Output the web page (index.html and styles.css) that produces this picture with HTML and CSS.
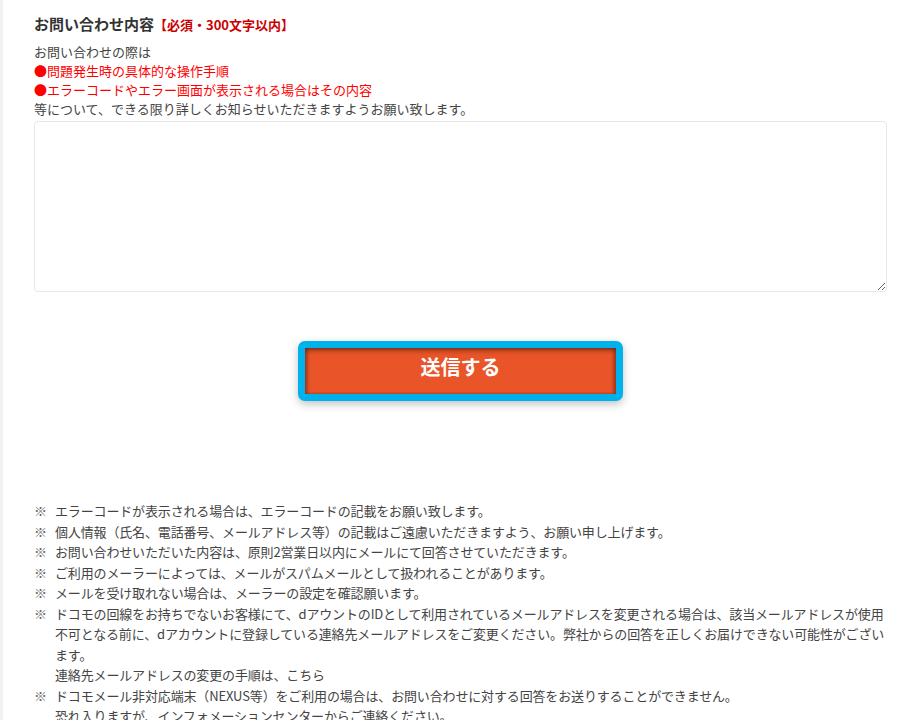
FILE: index.html
```html
<!DOCTYPE html>
<html lang="ja">
<head>
  <meta charset="UTF-8" />
  <meta name="viewport" content="width=device-width, initial-scale=1.0"/>
  <title>お問い合わせ</title>
  <link rel="stylesheet" href="styles.css">
</head>
<body>
  <div class="page">

    <form class="inquiry" onsubmit="return false;">
      <h2 class="field-title">お問い合わせ内容<span class="required">【必須・300文字以内】</span></h2>

      <div class="field-help">
        <p>お問い合わせの際は</p>
        <p class="point">●問題発生時の具体的な操作手順</p>
        <p class="point">●エラーコードやエラー画面が表示される場合はその内容</p>
        <p>等について、できる限り詳しくお知らせいただきますようお願い致します。</p>
      </div>

      <textarea class="message" name="message" maxlength="300"></textarea>

      <div class="submit-area">
        <button type="submit" class="submit-btn">送信する</button>
      </div>
    </form>

    <ul class="notes">
      <li>エラーコードが表示される場合は、エラーコードの記載をお願い致します。</li>
      <li>個人情報（氏名、電話番号、メールアドレス等）の記載はご遠慮いただきますよう、お願い申し上げます。</li>
      <li>お問い合わせいただいた内容は、原則2営業日以内にメールにて回答させていただきます。</li>
      <li>ご利用のメーラーによっては、メールがスパムメールとして扱われることがあります。</li>
      <li>メールを受け取れない場合は、メーラーの設定を確認願います。</li>
      <li>
        ドコモの回線をお持ちでないお客様にて、dアウントのIDとして利用されているメールアドレスを変更される場合は、該当メールアドレスが使用不可となる前に、dアカウントに登録している連絡先メールアドレスをご変更ください。弊社からの回答を正しくお届けできない可能性がございます。
        <span class="sub">連絡先メールアドレスの変更の手順は、<a href="#">こちら</a></span>
      </li>
      <li>
        ドコモメール非対応端末（NEXUS等）をご利用の場合は、お問い合わせに対する回答をお送りすることができません。
        <span class="sub">恐れ入りますが、インフォメーションセンターからご連絡ください。</span>
      </li>
    </ul>

  </div>
</body>
</html>
```

FILE: styles.css
```css
body {
  margin: 0;
  font-family: "Noto Sans CJK JP", sans-serif;
  color: #444;
  background: #fff;
}

.page {
  border-left: 3px solid #f1f1f1;
  padding: 14px 13px 0 31px;
  min-height: 720px;
}

.field-title {
  margin: 0 0 7px;
  font-size: 15px;
  line-height: 20px;
  font-weight: bold;
  color: #333;
}

.required {
  font-size: 13px;
  color: #cc0000;
}

.field-help p {
  margin: 0;
  font-size: 13px;
  line-height: 19px;
}

.field-help .point {
  color: #f00;
}

.message {
  display: block;
  box-sizing: border-box;
  width: 100%;
  height: 171px;
  margin-top: 3px;
  border: 1px solid #e8e8e8;
  border-radius: 4px;
  padding: 6px;
  font-family: inherit;
  font-size: 13px;
}

.submit-area {
  display: flex;
  justify-content: center;
  padding-top: 49px;
}

.submit-btn {
  width: 325px;
  height: 60px;
  padding: 0 0 10px;
  border: 7px solid #00b2ec;
  border-radius: 7px;
  background: #e95428;
  box-shadow: inset 0 3px 4px rgba(0, 0, 0, 0.35),
              inset 3px 0 3px rgba(0, 0, 0, 0.2),
              inset -3px 0 3px rgba(0, 0, 0, 0.2),
              0 3px 8px rgba(0, 0, 0, 0.25);
  color: #fff;
  font-family: inherit;
  font-size: 20px;
  font-weight: bold;
  cursor: pointer;
}

.notes {
  list-style: none;
  margin: 100px 0 0;
  padding: 0 0 0 21px;
  font-size: 13px;
  line-height: 20.5px;
  letter-spacing: -0.15px;
}

.notes li {
  position: relative;
}

.notes li::before {
  content: "※";
  position: absolute;
  left: -21px;
  color: #666;
}

.notes .sub {
  display: block;
}

.notes a {
  color: inherit;
  text-decoration: none;
}
```
